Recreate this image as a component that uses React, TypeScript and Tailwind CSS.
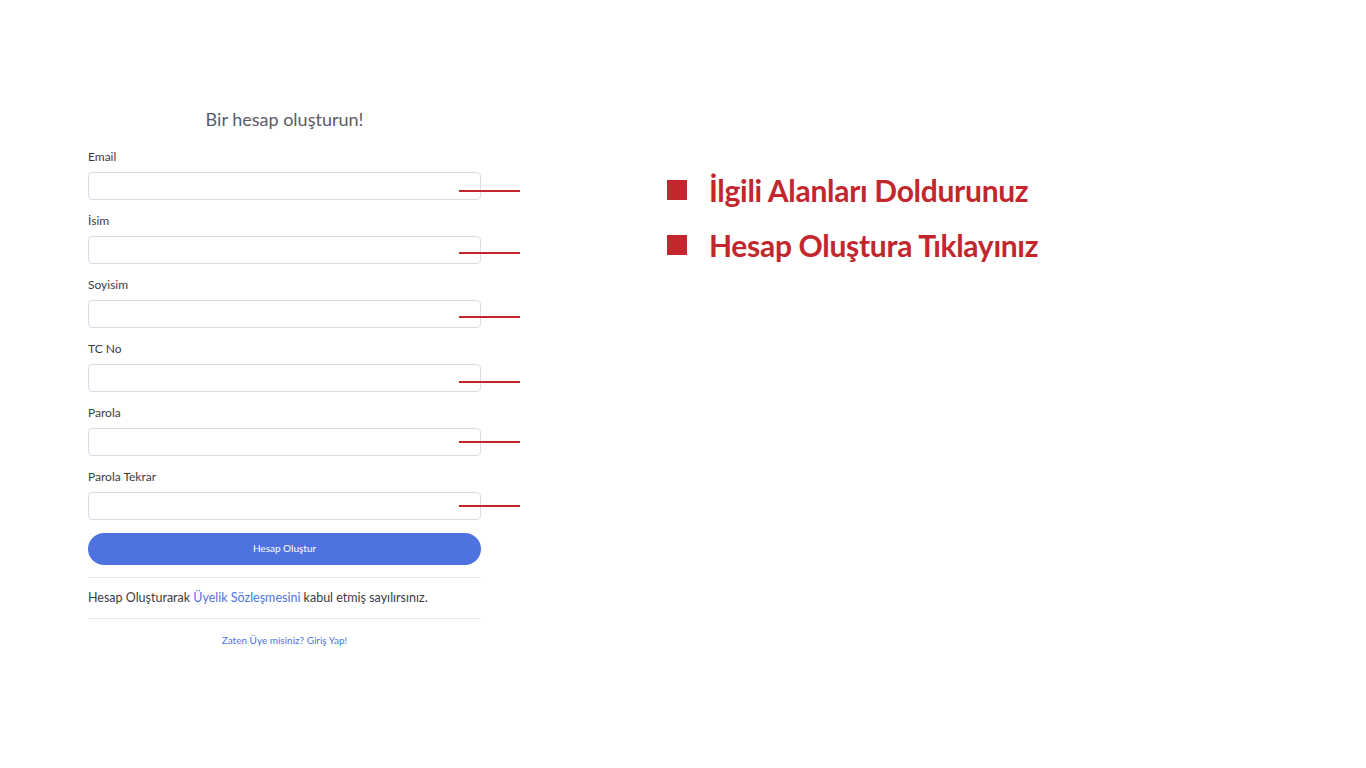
import React from "react";

const fields = [
  { label: "Email", line: 18 },
  { label: "İsim", line: 16 },
  { label: "Soyisim", line: 16 },
  { label: "TC No", line: 17 },
  { label: "Parola", line: 13 },
  { label: "Parola Tekrar", line: 13 },
];

const steps = ["İlgili Alanları Doldurunuz", "Hesap Oluştura Tıklayınız"];

export default function App() {
  return (
    <div className="min-h-screen w-full bg-white flex font-['Lato',sans-serif]">
      {/* Form */}
      <div className="w-[393px] ml-[88px] pt-[106px]">
        <h1 className="text-center text-[18px] leading-[27px] text-[#5a5c69] mb-[17px]">
          Bir hesap oluşturun!
        </h1>

        <div className="flex flex-col">
          {fields.map((f, i) => (
            <div key={i} className="relative mb-[14px]">
              <label className="block text-[12px] leading-[14px] text-[#3a3b45] mb-[8px]">{f.label}</label>
              <input
                type={f.label.startsWith("Parola") ? "password" : "text"}
                className="block w-full h-[28px] rounded-[4px] border border-[#d9dbe6] bg-white px-3 outline-none"
              />
              <div
                className="absolute left-[371px] w-[61px] h-[2px] bg-[#c1272d]"
                style={{ top: 22 + f.line }}
              />
            </div>
          ))}
        </div>

        <button className="mt-[-4px] w-full h-[32px] rounded-full bg-[#4e73df] text-white text-[10px]">
          Hesap Oluştur
        </button>

        <hr className="mt-[12px] border-t border-[#e3e6f0]" />
        <p className="py-[11px] text-[12.5px] leading-[18px] text-[#3a3b45]">
          Hesap Oluşturarak <span className="text-[#4e73df]">Üyelik Sözleşmesini</span> kabul etmiş sayılırsınız.
        </p>
        <hr className="border-t border-[#e3e6f0]" />
        <div className="mt-[14px] text-center text-[10px] leading-[15px] text-[#4e73df]">
          Zaten Üye misiniz? Giriş Yap!
        </div>
      </div>

      {/* Instructions */}
      <div className="ml-[186px] pt-[172px] flex flex-col gap-[19px]">
        {steps.map((s, i) => (
          <div key={i} className="flex items-center h-[36px]">
            <div className="w-[20px] h-[20px] bg-[#c1272d] shrink-0" />
            <span className="ml-[22px] text-[30px] leading-[36px] font-bold tracking-[-0.3px] text-[#c1272d]">
              {s}
            </span>
          </div>
        ))}
      </div>
    </div>
  );
}
